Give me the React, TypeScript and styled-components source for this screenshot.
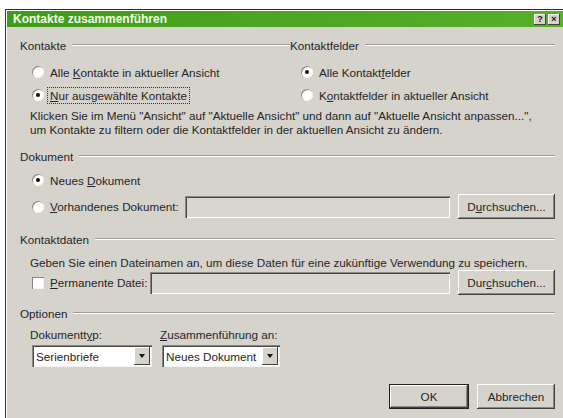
import React from 'react';
import styled, { createGlobalStyle } from 'styled-components';

const GlobalStyle = createGlobalStyle`
  html, body {
    margin: 0;
    background: #ffffff;
  }
  body {
    font-family: "Liberation Sans", Arial, sans-serif;
    font-size: 11.7px;
    color: #262626;
  }
`;

const Window = styled.div`
  margin: 9px 0 0 5px;
  height: 409px;
  border-top: 1px solid #2a2a2a;
  border-left: 1px solid #3a3a3a;
  box-shadow: inset 1px 1px 0 #ffffff;
  background: #d6d3cd;
  display: flex;
  flex-direction: column;
  overflow: hidden;
`;

const TitleBar = styled.div`
  height: 16px;
  margin: 1px 0 0 1px;
  padding: 0 3px 0 6px;
  background: linear-gradient(to right, #3f9c1a, #4ea823 60%, #58b02a);
  display: flex;
  align-items: center;
  justify-content: space-between;
`;

const Title = styled.span`
  color: #f2fbe9;
  font-weight: bold;
  font-size: 12px;
`;

const TitleButtons = styled.div`
  display: flex;
  gap: 2px;
`;

const TitleButton = styled.span`
  width: 12px;
  height: 11px;
  background: #d6d3cd;
  box-shadow: inset -1px -1px 0 #404040, inset 1px 1px 0 #ffffff;
  font-size: 9px;
  font-weight: bold;
  line-height: 11px;
  text-align: center;
  color: #111;
`;

const Body = styled.div`
  padding: 11px 8px 0 14px;
  display: flex;
  flex-direction: column;
`;

const GroupHeader = styled.div<{ $top?: number }>`
  height: 14px;
  margin-top: ${({ $top }) => $top ?? 0}px;
  display: flex;
  align-items: center;
  gap: 6px;
  &::after {
    content: '';
    flex: 1;
    border-top: 1px solid #a09d97;
    border-bottom: 1px solid #ffffff;
  }
`;

const Columns = styled.div`
  display: grid;
  grid-template-columns: 270px 1fr;
`;

const Column = styled.div`
  display: flex;
  flex-direction: column;
`;

const OptionList = styled.div<{ $indent: number; $top: number }>`
  display: flex;
  flex-direction: column;
  gap: 5px;
  margin: ${({ $top }) => $top}px 0 0 ${({ $indent }) => $indent}px;
`;

const OptionRow = styled.div`
  height: 18px;
  display: flex;
  align-items: center;
  gap: 4px;
`;

const Radio = styled.span<{ $checked?: boolean }>`
  width: 12px;
  height: 12px;
  border-radius: 50%;
  background: #ffffff;
  box-shadow: inset 1px 1px 0 #8a8882, inset -1px -1px 0 #f4f3f0;
  display: flex;
  align-items: center;
  justify-content: center;
  flex-shrink: 0;
  &::after {
    content: '';
    width: 4px;
    height: 4px;
    border-radius: 50%;
    background: ${({ $checked }) => ($checked ? '#111' : 'transparent')};
  }
`;

const Check = styled.span`
  width: 12px;
  height: 12px;
  background: #ffffff;
  box-shadow: inset 1px 1px 0 #8a8882, inset -1px -1px 0 #f4f3f0;
  flex-shrink: 0;
`;

const Label = styled.span<{ $focus?: boolean }>`
  white-space: nowrap;
  padding: 1px 2px;
  outline: ${({ $focus }) => ($focus ? '1px dotted #333' : 'none')};
`;

const Key = styled.span`
  text-decoration: underline;
`;

const Note = styled.p<{ $top: number }>`
  margin: ${({ $top }) => $top}px 0 0 10px;
  line-height: 14px;
  white-space: pre-line;
`;

const FieldRow = styled.div<{ $top: number }>`
  height: 25px;
  margin: ${({ $top }) => $top}px 0 0 12px;
  display: flex;
  align-items: center;
`;

const InlineOption = styled.div<{ $width: number }>`
  width: ${({ $width }) => $width}px;
  display: flex;
  align-items: center;
  gap: 4px;
  flex-shrink: 0;
`;

const TextBox = styled.div`
  flex: 1;
  height: 22px;
  box-sizing: border-box;
  background: #d9d6d0;
  box-shadow: inset 1px 1px 0 #8a8882, inset 2px 2px 0 #4a4844, inset -1px -1px 0 #ffffff;
`;

const Button = styled.button<{ $width: number; $default?: boolean }>`
  width: ${({ $width }) => $width}px;
  height: 25px;
  margin-left: 8px;
  padding: 0;
  font: inherit;
  color: inherit;
  background: #d6d3cd;
  border: ${({ $default }) => ($default ? '1px solid #222' : 'none')};
  box-shadow: inset -1px -1px 0 #404040, inset 1px 1px 0 #ffffff,
    inset -2px -2px 0 #8a8882;
  flex-shrink: 0;
`;

const SelectGrid = styled.div`
  margin: 8px 0 0 12px;
  display: grid;
  grid-template-columns: 120px 118px;
  column-gap: 10px;
  row-gap: 3px;
`;

const SelectLabel = styled.span`
  height: 14px;
  line-height: 14px;
  margin-left: -2px;
`;

const Select = styled.div`
  height: 22px;
  box-sizing: border-box;
  padding: 2px;
  background: #ffffff;
  box-shadow: inset 1px 1px 0 #8a8882, inset 2px 2px 0 #4a4844, inset -1px -1px 0 #f4f3f0;
  display: flex;
  align-items: center;
`;

const SelectValue = styled.span`
  flex: 1;
  padding-left: 2px;
  white-space: nowrap;
  overflow: hidden;
`;

const SelectArrow = styled.span`
  width: 16px;
  height: 18px;
  background: #d6d3cd;
  box-shadow: inset -1px -1px 0 #404040, inset 1px 1px 0 #ffffff;
  display: flex;
  align-items: center;
  justify-content: center;
  &::after {
    content: '';
    border-left: 3px solid transparent;
    border-right: 3px solid transparent;
    border-top: 4px solid #111;
  }
`;

const Footer = styled.div`
  margin-top: 17px;
  display: flex;
  justify-content: flex-end;
`;

export default function App() {
  return (
    <>
      <GlobalStyle />
      <Window>
        <TitleBar>
          <Title>Kontakte zusammenführen</Title>
          <TitleButtons>
            <TitleButton>?</TitleButton>
            <TitleButton>×</TitleButton>
          </TitleButtons>
        </TitleBar>
        <Body>
          <Columns>
            <Column>
              <GroupHeader>Kontakte</GroupHeader>
              <OptionList $indent={12} $top={11}>
                <OptionRow>
                  <Radio />
                  <Label>
                    Alle <Key>K</Key>ontakte in aktueller Ansicht
                  </Label>
                </OptionRow>
                <OptionRow>
                  <Radio $checked />
                  <Label $focus>
                    <Key>N</Key>ur ausgewählte Kontakte
                  </Label>
                </OptionRow>
              </OptionList>
            </Column>
            <Column>
              <GroupHeader>Kontaktfelder</GroupHeader>
              <OptionList $indent={11} $top={11}>
                <OptionRow>
                  <Radio $checked />
                  <Label>
                    Alle Kontakt<Key>f</Key>elder
                  </Label>
                </OptionRow>
                <OptionRow>
                  <Radio />
                  <Label>
                    K<Key>o</Key>ntaktfelder in aktueller Ansicht
                  </Label>
                </OptionRow>
              </OptionList>
            </Column>
          </Columns>
          <Note $top={5}>
            {'Klicken Sie im Menü "Ansicht" auf "Aktuelle Ansicht" und dann auf "Aktuelle Ansicht anpassen...",\num Kontakte zu filtern oder die Kontaktfelder in der aktuellen Ansicht zu ändern.'}
          </Note>

          <GroupHeader $top={12}>Dokument</GroupHeader>
          <OptionList $indent={12} $top={8}>
            <OptionRow>
              <Radio $checked />
              <Label>
                Neues <Key>D</Key>okument
              </Label>
            </OptionRow>
          </OptionList>
          <FieldRow $top={5}>
            <InlineOption $width={153}>
              <Radio />
              <Label>
                <Key>V</Key>orhandenes Dokument:
              </Label>
            </InlineOption>
            <TextBox />
            <Button $width={97}>
              D<Key>u</Key>rchsuchen...
            </Button>
          </FieldRow>

          <GroupHeader $top={13}>Kontaktdaten</GroupHeader>
          <Note $top={10}>
            Geben Sie einen Dateinamen an, um diese Daten für eine zukünftige Verwendung zu speichern.
          </Note>
          <FieldRow $top={0}>
            <InlineOption $width={118}>
              <Check />
              <Label>
                <Key>P</Key>ermanente Datei:
              </Label>
            </InlineOption>
            <TextBox />
            <Button $width={97}>
              Dur<Key>c</Key>hsuchen...
            </Button>
          </FieldRow>

          <GroupHeader $top={11}>Optionen</GroupHeader>
          <SelectGrid>
            <SelectLabel>
              Dokumentt<Key>y</Key>p:
            </SelectLabel>
            <SelectLabel>
              <Key>Z</Key>usammenführung an:
            </SelectLabel>
            <Select>
              <SelectValue>Serienbriefe</SelectValue>
              <SelectArrow />
            </Select>
            <Select>
              <SelectValue>Neues Dokument</SelectValue>
              <SelectArrow />
            </Select>
          </SelectGrid>

          <Footer>
            <Button $width={80} $default>
              OK
            </Button>
            <Button $width={78}>Abbrechen</Button>
          </Footer>
        </Body>
      </Window>
    </>
  );
}
